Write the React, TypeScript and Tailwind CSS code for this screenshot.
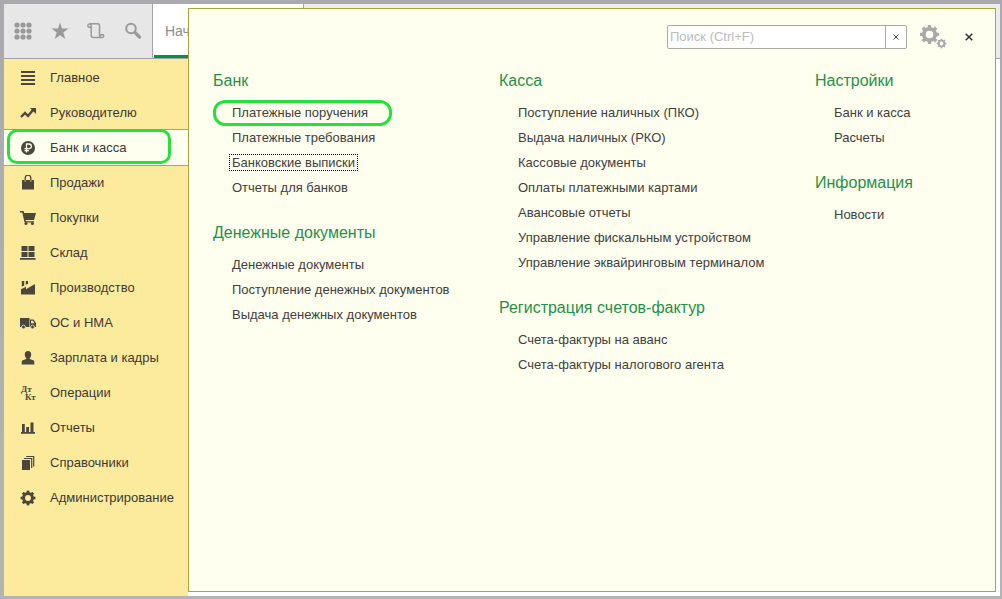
import React, { useState } from 'react';
import clsx from 'clsx';

type IconProps = { children: React.ReactNode; size?: number; box?: number };

const Glyph: React.FC<IconProps> = ({ children, size = 16, box = 16 }) => (
  <svg width={size} height={size} viewBox={`0 0 ${box} ${box}`} fill="currentColor" aria-hidden="true" className="shrink-0">
    {children}
  </svg>
);

const GEAR_ANGLES = [0, 45, 90, 135, 180, 225, 270, 315];

// Gear centred on (cx, cy); r is the outer radius of the teeth
const Gear: React.FC<{ cx: number; cy: number; r: number }> = ({ cx, cy, r }) => (
  <g>
    <circle cx={cx} cy={cy} r={r * 0.6} fill="none" stroke="currentColor" strokeWidth={r * 0.4} />
    {GEAR_ANGLES.map((angle) => (
      <rect
        key={angle}
        x={cx - r * 0.18}
        y={cy - r}
        width={r * 0.36}
        height={r * 0.34}
        transform={`rotate(${angle} ${cx} ${cy})`}
      />
    ))}
  </g>
);

const sections = [
  { label: 'Главное', icon: <path d="M1 1h14v2H1zM1 5h14v2H1zM1 9h14v2H1zM1 13h14v2H1z" /> },
  {
    label: 'Руководителю',
    icon: (
      <>
        <path d="M1 12l4-4 3 3 5-6" fill="none" stroke="currentColor" strokeWidth="2.4" />
        <path d="M10 3h6v6z" />
      </>
    ),
  },
  {
    label: 'Банк и касса',
    icon: (
      <>
        <circle cx="8" cy="8" r="7" />
        <path d="M6.5 12.5V4h2.6a2.3 2.3 0 0 1 0 4.6H4.5M4.5 10.6H9" fill="none" stroke="#fffff0" strokeWidth="1.3" />
      </>
    ),
  },
  {
    label: 'Продажи',
    icon: (
      <>
        <path d="M2 5h12v9.5H2z" />
        <path d="M5.2 7V3a2.8 2.8 0 0 1 5.6 0V7" fill="none" stroke="currentColor" strokeWidth="1.3" />
        <path d="M5.2 5v1.8M10.800 5v1.8" stroke="#fdeb9d" strokeWidth="0.8" />
      </>
    ),
  },
  {
    label: 'Покупки',
    icon: (
      <>
        <path d="M0 1h3.500l.7 2H16l-2 7H5.500l.3 1.200H14V12.500H4.500L2.300 2.500H0z" />
        <circle cx="6" cy="13.600" r="1.500" />
        <circle cx="12.400" cy="13.600" r="1.500" />
      </>
    ),
  },
  { label: 'Склад', icon: <path d="M1.500 1h6v5h-6zM8.500 1h6v5h-6zM1.500 7h6v5h-6zM8.500 7h6v5h-6zM0 13h15.500v1.800H0z" /> },
  { label: 'Производство', icon: <path d="M1 14.500V9.200L6 6.800v2.400L15 4v10.500zM1.800 1H4.200v4.500L1.800 6.800zM5.700 1H8v3L5.700 4.600z" /> },
  {
    label: 'ОС и НМА',
    icon: (
      <>
        <path d="M0 3h9.500v9H0zM10 4.500h3.500L16 8v4h-6zM11 5.700v2.500h3.500L13 5.700z" fillRule="evenodd" />
        <g stroke="#fdeb9d" strokeWidth="0.8">
          <circle cx="3.500" cy="12" r="1.900" />
          <circle cx="12.500" cy="12" r="1.900" />
        </g>
      </>
    ),
  },
  { label: 'Зарплата и кадры', icon: <path d="M8 1c2.200 0 3.200 1.400 3.200 3.400 0 1.600-.7 2.900-1.500 3.600v1l3.500 1.200c.7.300 1.100.8 1.100 1.600V14.500H1.700v-2.700c0-.8.400-1.300 1.100-1.600L6.300 9V8c-.8-.7-1.500-2-1.500-3.600C4.800 2.400 5.800 1 8 1z" /> },
  {
    label: 'Операции',
    icon: (
      <>
        <text x="1" y="6.500" fontFamily="Liberation Serif, serif" fontWeight="700" fontSize="9">Дт</text>
        <text x="5" y="14.500" fontFamily="Liberation Serif, serif" fontWeight="700" fontSize="9">Кт</text>
      </>
    ),
  },
  { label: 'Отчеты', icon: <path d="M2 4h2.800v8.500H2zM6.200 7h2.800v5.500H6.200zM10.500 2.500h3v10h-3zM1 12h14v1.800H1z" /> },
  {
    label: 'Справочники',
    icon: (
      <>
        <path d="M2 5h8v10H2z" />
        <path d="M4 3.500h7.700V13M6.200 1.500h7.500V11.500" fill="none" stroke="currentColor" strokeWidth="1.200" />
      </>
    ),
  },
  { label: 'Администрирование', icon: <Gear cx={8} cy={8} r={7.4} /> },
];

const columns = [
  [
    { title: 'Банк', items: ['Платежные поручения', 'Платежные требования', 'Банковские выписки', 'Отчеты для банков'] },
    { title: 'Денежные документы', items: ['Денежные документы', 'Поступление денежных документов', 'Выдача денежных документов'] },
  ],
  [
    {
      title: 'Касса',
      items: [
        'Поступление наличных (ПКО)',
        'Выдача наличных (РКО)',
        'Кассовые документы',
        'Оплаты платежными картами',
        'Авансовые отчеты',
        'Управление фискальным устройством',
        'Управление эквайринговым терминалом',
      ],
    },
    { title: 'Регистрация счетов-фактур', items: ['Счета-фактуры на аванс', 'Счета-фактуры налогового агента'] },
  ],
  [
    { title: 'Настройки', items: ['Банк и касса', 'Расчеты'] },
    { title: 'Информация', items: ['Новости'] },
  ],
];

const ACTIVE_SECTION = 'Банк и касса';
const MARKED_ITEM = 'Платежные поручения';
const FOCUSED_ITEM = 'Банковские выписки';

const Toolbar = () => (
  <div className="flex w-[149px] items-center justify-between border-r border-[#a3a3a3] bg-[#e7e7e8] pr-2.5 pl-2.5 text-[#999]">
    <button aria-label="Меню функций">
      <Glyph size={18} box={18}>
        {[3, 9, 15].map((y) => [3, 9, 15].map((x) => <circle key={`${x}-${y}`} cx={x} cy={y} r="2.600" />))}
      </Glyph>
    </button>
    <button aria-label="Избранное">
      <Glyph size={18} box={18}>
        <path d="M9 .5l2 6.100h6.500l-5.200 3.900 2 6.500L9 13.200 3.700 17l2-6.500L.5 6.600H7z" />
      </Glyph>
    </button>
    <button aria-label="История">
      <Glyph size={18} box={18}>
        <path
          d="M4.500 5.300H2.500a1.700 1.700 0 1 1 1.700-1.800V13a2.500 2.500 0 0 0 2.500 2.500h8.500a1.500 1.500 0 1 0-1.500-1.500M2.500 1.800h8a2 2 0 0 1 2 2v8.700a2.500 2.500 0 0 0 2.700 3"
          fill="none"
          stroke="currentColor"
          strokeWidth="1.500"
        />
      </Glyph>
    </button>
    <button aria-label="Поиск">
      <Glyph size={18} box={18}>
        <circle cx="7" cy="6.500" r="4.800" fill="none" stroke="currentColor" strokeWidth="2" />
        <path d="M11 10.500l4.500 4.500" stroke="currentColor" strokeWidth="3.200" strokeLinecap="round" />
      </Glyph>
    </button>
  </div>
);

const Sidebar = () => (
  <nav className="w-[184px] shrink-0 bg-[#fdeb9d] pt-px text-[13px] text-[#3d3935]">
    {sections.map(({ label, icon }) => {
      const active = label === ACTIVE_SECTION;
      return (
        <a
          key={label}
          href="#"
          className={clsx(
            'flex items-center gap-3.5 pl-4 whitespace-nowrap',
            active ? 'relative -my-px h-[37px] border-y border-[#b5a548] bg-[#fffff0]' : 'h-[35px]',
          )}
        >
          <span className="text-[#4b473d]">
            <Glyph>{icon}</Glyph>
          </span>
          {label}
          {active && <span className="absolute -top-px left-[3px] h-[35px] w-[164px] rounded-[10px] border-3 border-[#25e23b]" />}
        </a>
      );
    })}
  </nav>
);

const SearchBar = () => {
  const [query, setQuery] = useState('');
  return (
    <div className="flex items-center justify-end pt-3.5 pr-[18px]">
      <div className="flex h-6 w-60 rounded-xs border border-[#a9a9a4] bg-white">
        <input
          aria-label="Поиск"
          value={query}
          onChange={(e) => setQuery(e.target.value)}
          placeholder="Поиск (Ctrl+F)"
          className="min-w-0 flex-1 px-0.5 text-[13px] outline-none placeholder:text-[#bcbcbc]"
        />
        <button
          aria-label="Очистить"
          onClick={() => setQuery('')}
          className="flex w-[21px] items-center justify-center border-l border-[#a9a9a4] text-[#444]"
        >
          <Glyph size={6} box={6}>
            <path d="M.5 .5l5 5M5.500 .5l-5 5" stroke="currentColor" strokeWidth="1" />
          </Glyph>
        </button>
      </div>
      <button aria-label="Настройка" className="ml-3 text-[#aaa]">
        <Glyph size={28} box={28}>
          <Gear cx={10.5} cy={11.500} r={9.5} />
          <Gear cx={22.5} cy={20.500} r={4.800} />
        </Glyph>
      </button>
      <button aria-label="Закрыть" className="ml-3.5 flex size-4 items-center justify-center text-[#333]">
        <Glyph size={8} box={8}>
          <path d="M.7 .7l6.600 6.600M7.300 .7L.7 7.300" stroke="currentColor" strokeWidth="1.500" />
        </Glyph>
      </button>
    </div>
  );
};

const SectionMenu = () => (
  <section className="absolute top-1 right-1 bottom-1 left-[184px] border border-[#a8a540] bg-[#fffff0]">
    <SearchBar />
    <div className="mt-[18px] grid grid-cols-[143fr_158fr_90fr] pl-6">
      {columns.map((groups, i) => (
        <div key={i} className="flex flex-col gap-[21px]">
          {groups.map(({ title, items }) => (
            <div key={title}>
              <h2 className="mb-[7px] text-base leading-6 whitespace-nowrap text-[#1f9148]">{title}</h2>
              <ul className="pl-[19px] text-[13px] leading-[25px] whitespace-nowrap text-[#404040]">
                {items.map((item) => (
                  <li key={item} className="relative">
                    {item === MARKED_ITEM && (
                      <span className="absolute top-0 -left-[19px] h-[26px] w-[179px] rounded-xl border-3 border-[#25e23b]" />
                    )}
                    <a
                      href="#"
                      className={clsx(item === FOCUSED_ITEM && '-mx-0.5 px-0.5 outline-1 outline-dotted outline-black')}
                    >
                      {item}
                    </a>
                  </li>
                ))}
              </ul>
            </div>
          ))}
        </div>
      ))}
    </div>
  </section>
);

export default function App() {
  return (
    <div className="flex min-h-screen bg-linear-to-b from-[#aaaaae] to-[#b4b4b4] pt-1 pr-0.5 pb-[3px] pl-1 font-['Liberation_Sans',Arial,sans-serif]">
      <div className="relative flex flex-1 flex-col bg-white">
        <header className="flex h-[55px] border-b border-[#a3a3a3] bg-[#ececec]">
          <Toolbar />
          <div className="flex w-[151px] border-r border-[#a3a3a3] bg-white pl-px">
            <a href="#" className="flex-1 border-b-3 border-[#15894b] pt-[17px] pl-[11px] text-sm text-[#8c8c8c]">
              Начальная страница
            </a>
          </div>
        </header>
        <div className="flex flex-1">
          <Sidebar />
        </div>
        <SectionMenu />
      </div>
    </div>
  );
}
